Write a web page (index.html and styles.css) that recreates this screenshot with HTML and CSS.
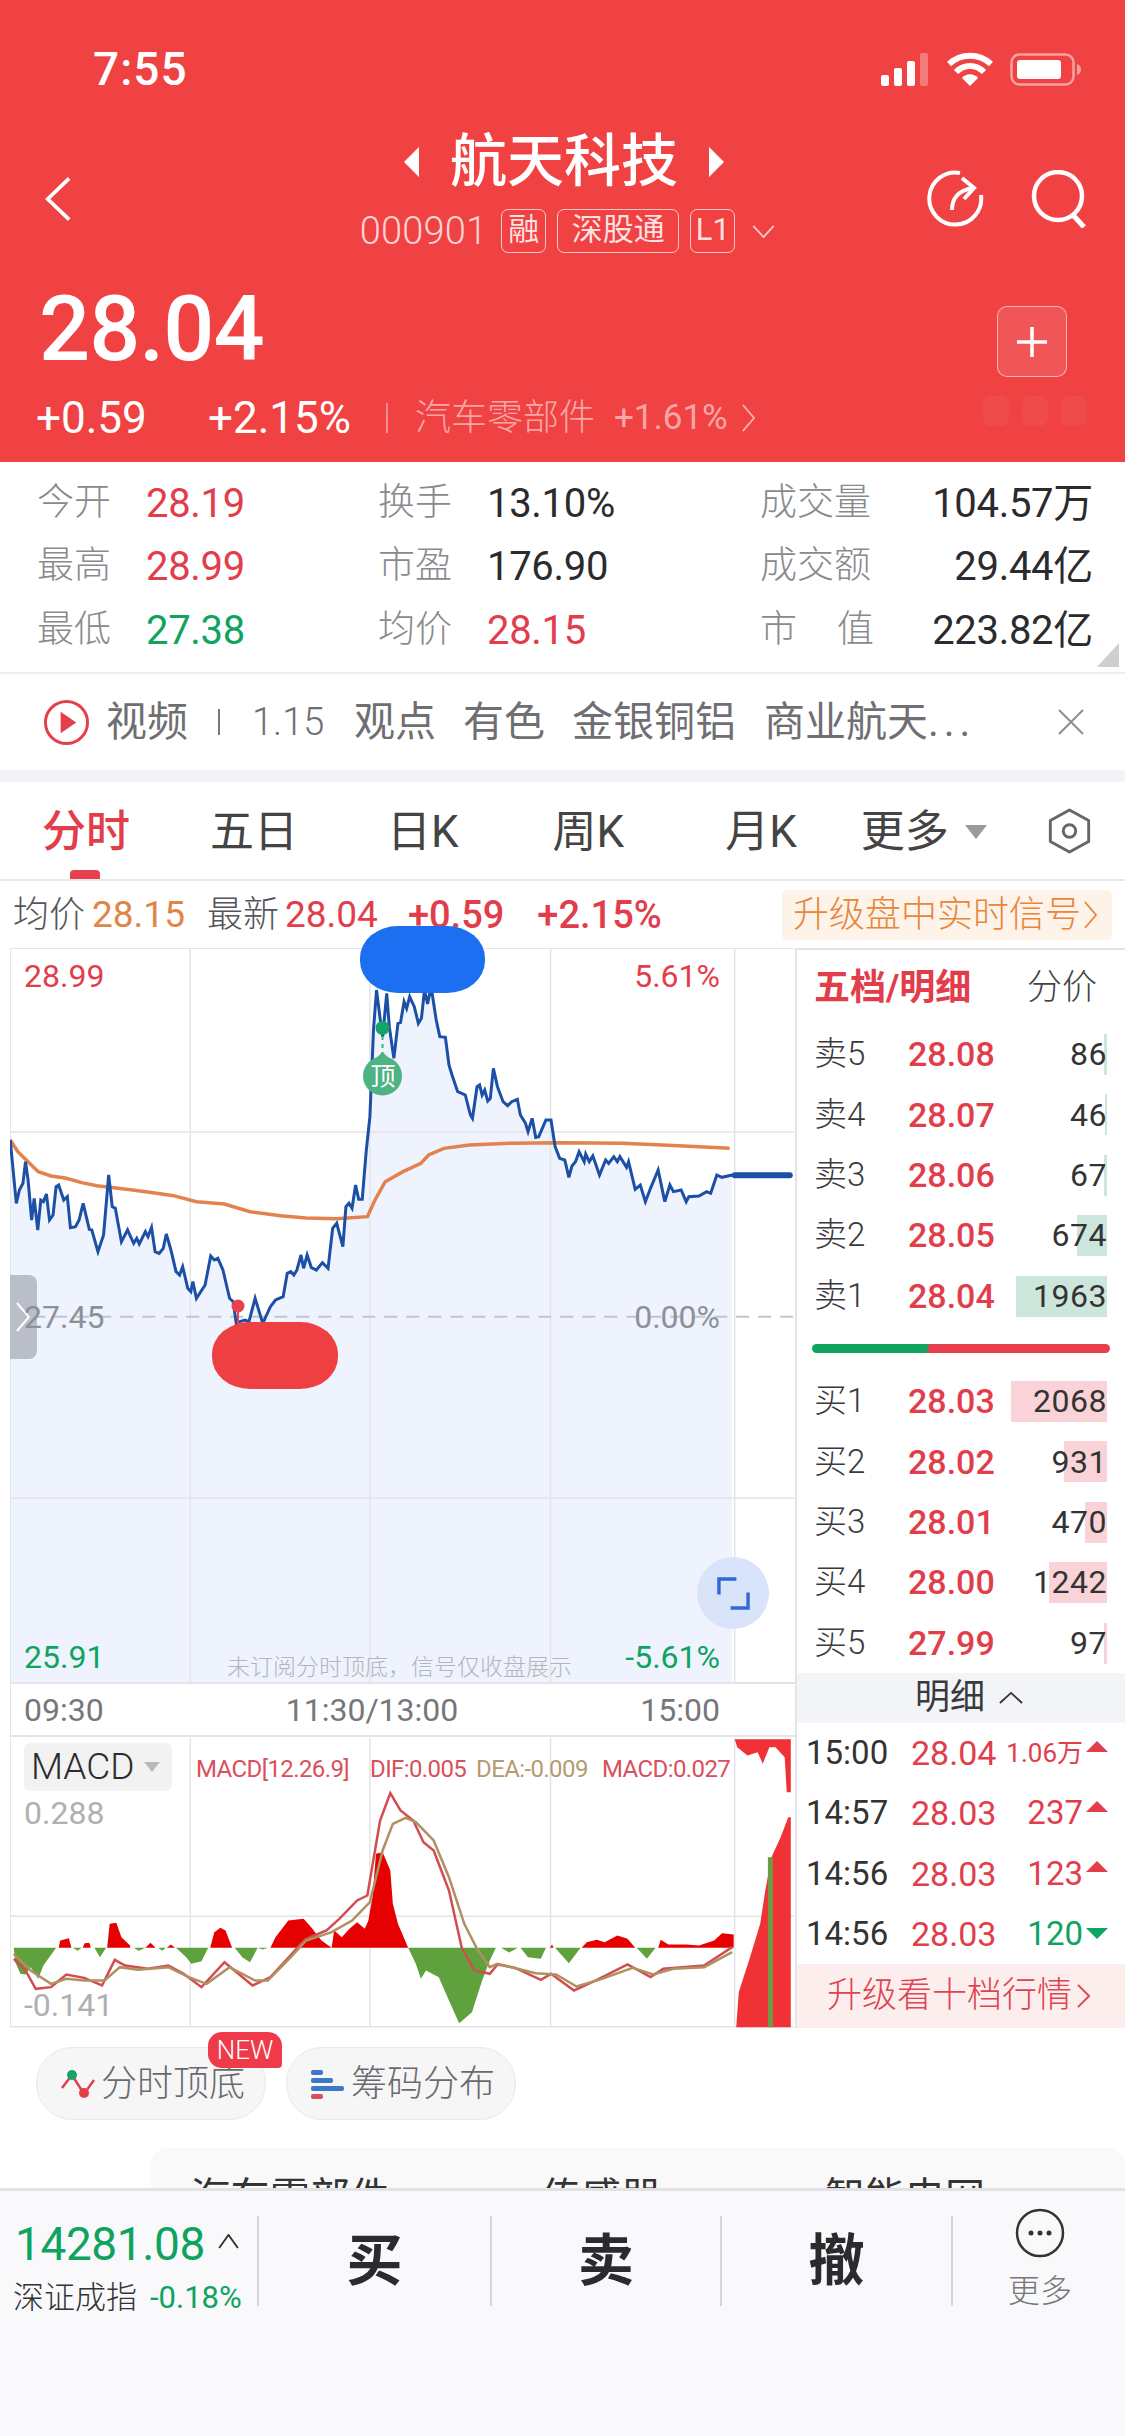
FILE: index.html
```html
<!DOCTYPE html>
<html lang="zh-CN">
<head>
<meta charset="utf-8">
<title>航天科技</title>
<link rel="stylesheet" href="styles.css">
</head>
<body>
<div class="page">
  <header class="header">
    <div class="status">
      <span class="clock">7:55</span>
      <div class="status-icons">
        <svg class="ic-signal" viewBox="0 0 50 33"><rect x="0" y="22" width="8" height="11" rx="2" fill="#fff"/><rect x="13" y="15" width="8" height="18" rx="2" fill="#fff"/><rect x="26" y="8" width="8" height="25" rx="2" fill="#fff"/><rect x="39" y="0" width="8" height="33" rx="2" fill="#fff" opacity=".3"/></svg>
        <svg class="ic-wifi" viewBox="0 0 46 34"><path d="M2 12 C14 1 32 1 44 12 M9 20 C17 12 29 12 37 20" fill="none" stroke="#fff" stroke-width="6"/><path d="M15 26 C19 21 27 21 31 26 L23 34 Z" fill="#fff"/></svg>
        <svg class="ic-batt" viewBox="0 0 72 33"><rect x="1.5" y="1.5" width="62" height="30" rx="8" fill="none" stroke="#fff" stroke-opacity=".5" stroke-width="2.5"/><rect x="7" y="7" width="44" height="19" rx="3" fill="#fff"/><path d="M67 11 C70 12 71 14 71 16.500 C71 19 70 21 67 22 Z" fill="#fff" fill-opacity=".5"/></svg>
      </div>
    </div>
    <div class="nav">
      <svg class="ic-back" viewBox="0 0 30 48"><path d="M27 2 L4 24 L27 46" fill="none" stroke="#fff" stroke-width="4"/></svg>
      <div class="title-block">
        <div class="title-row">
          <svg class="ic-tri" viewBox="0 0 18 36"><path d="M18 0 L0 18 L18 36 Z" fill="#fff"/></svg>
          <h1 class="title">航天科技</h1>
          <svg class="ic-tri" viewBox="0 0 18 36"><path d="M0 0 L18 18 L0 36 Z" fill="#fff"/></svg>
        </div>
        <div class="sub-row">
          <span class="code">000901</span>
          <span class="tag tag-sq">融</span>
          <span class="tag tag-wide">深股通</span>
          <span class="tag tag-sq">L1</span>
          <svg class="ic-down" viewBox="0 0 24 14"><path d="M1 1 L12 13 L23 1" fill="none" stroke="#fff" stroke-opacity=".7" stroke-width="2"/></svg>
        </div>
      </div>
      <div class="nav-actions">
        <svg class="ic-refresh" viewBox="0 0 58 58"><path d="M34 3 A26 26 0 1 0 55 25" fill="none" stroke="#fff" stroke-width="4"/><path d="M26 40 C26 28 32 21 46 18" fill="none" stroke="#fff" stroke-width="4"/><path d="M36 8 L48 18 L38 29" fill="none" stroke="#fff" stroke-width="4"/></svg>
        <svg class="ic-search" viewBox="0 0 56 58"><circle cx="27" cy="26" r="24" fill="none" stroke="#fff" stroke-width="4.500"/><path d="M41 44 L53 57" stroke="#fff" stroke-width="5"/></svg>
      </div>
    </div>
    <div class="quote">
      <div class="quote-main">
        <div class="price">28.04</div>
        <div class="change-row">
          <span class="chg chg-a">+0.59</span>
          <span class="chg chg-b">+2.15%</span>
          <span class="sep"></span>
          <span class="sector">汽车零部件</span>
          <span class="sector-pct">+1.61%</span>
          <svg class="ic-sector" viewBox="0 0 14 30"><path d="M1 1 L13 15 L1 29" fill="none" stroke="#fff" stroke-opacity=".6" stroke-width="2"/></svg>
        </div>
      </div>
      <div class="quote-side">
        <button class="plus"><svg viewBox="0 0 34 34"><path d="M17 2 V32 M2 17 H32" stroke="#fff" stroke-width="3.500"/></svg></button>
        <div class="ghost"><i></i><i></i><i></i></div>
      </div>
    </div>
  </header>

  <section class="stats">
    <div class="stat"><span class="k">今开</span><span class="v up">28.19</span></div>
    <div class="stat"><span class="k">换手</span><span class="v">13.10%</span></div>
    <div class="stat wide"><span class="k">成交量</span><span class="v">104.57万</span></div>
    <div class="stat"><span class="k">最高</span><span class="v up">28.99</span></div>
    <div class="stat"><span class="k">市盈</span><span class="v">176.90</span></div>
    <div class="stat wide"><span class="k">成交额</span><span class="v">29.44亿</span></div>
    <div class="stat"><span class="k">最低</span><span class="v down">27.38</span></div>
    <div class="stat"><span class="k">均价</span><span class="v up">28.15</span></div>
    <div class="stat wide"><span class="k just">市值</span><span class="v">223.82亿</span></div>
    <span class="corner"></span>
  </section>

  <section class="news">
    <svg class="ic-play" viewBox="0 0 48 48"><circle cx="24" cy="24" r="21.500" fill="none" stroke="#e4404c" stroke-width="3"/><path d="M18 13 L34 24 L18 35 Z" fill="#e4404c"/></svg>
    <span class="news-a">视频</span>
    <span class="news-bar"></span>
    <span class="news-date">1.15</span>
    <span class="news-b">观点</span>
    <span class="news-c">有色</span>
    <span class="news-d">金银铜铝</span>
    <span class="news-e">商业航天<span class="dots">...</span></span>
    <svg class="ic-close" viewBox="0 0 26 26"><path d="M1 1 L25 25 M25 1 L1 25" stroke="#8d8d92" stroke-width="2"/></svg>
  </section>

  <nav class="tabs">
    <span class="tab tab-on">分时</span>
    <span class="tab t2">五日</span>
    <span class="tab t3">日K</span>
    <span class="tab t4">周K</span>
    <span class="tab t5">月K</span>
    <span class="tab t6">更多</span>
    <span class="tri-more"></span>
    <svg class="ic-hex" viewBox="0 0 44 48"><path d="M22 2 L42 13 V35 L22 46 L2 35 V13 Z" fill="none" stroke="#666" stroke-width="3" stroke-linejoin="round"/><circle cx="22" cy="24" r="6.500" fill="none" stroke="#666" stroke-width="3"/></svg>
  </nav>

  <div class="info">
    <span class="i-k">均价</span><span class="i-avg">28.15</span>
    <span class="i-k i-k2">最新</span><span class="i-new">28.04</span>
    <span class="i-chg1">+0.59</span><span class="i-chg2">+2.15%</span>
    <span class="upgrade">升级盘中实时信号<svg viewBox="0 0 14 30"><path d="M1 1 L13 15 L1 29" fill="none" stroke="#e8863c" stroke-width="2"/></svg></span>
  </div>

  <div class="main">
    <div class="charts">
      <div class="price-pane">
        <svg class="canvas" viewBox="10 948 785 734">
          <g transform="translate(0 930) scale(.5102 .33333)">
            <polygon fill="#eef3fd" points="20,630 32,820 38,780 45,760 50,695 55,750 62,870 67,805 74,900 80,810 85,815 91,792 97,870 104,855 110,770 115,765 125,810 132,800 138,893 148,890 155,870 163,820 175,898 180,900 192,965 203,915 213,735 220,830 226,835 238,935 250,900 262,940 268,925 273,942 285,905 290,920 297,892 304,965 312,970 320,955 326,912 335,960 345,1025 352,1035 358,1010 368,1075 374,1085 378,1055 385,1105 402,1065 413,978 420,990 427,985 437,1020 450,1105 457,1115 463,1180 470,1175 480,1170 488,1175 500,1105 515,1180 530,1130 540,1110 555,1100 563,1030 570,1025 576,1035 582,1020 590,975 595,1015 602,975 610,1012 620,1020 632,998 643,1015 652,895 660,880 672,950 678,830 684,820 690,835 697,765 703,808 710,808 718,660 725,560 732,300 738,180 745,265 750,320 758,190 763,290 772,385 780,280 785,278 792,215 797,235 803,200 812,230 820,280 826,265 832,180 838,222 845,170 855,270 862,320 873,322 880,405 886,435 897,485 905,490 912,495 922,555 926,565 935,470 940,465 945,495 950,480 956,513 961,505 967,415 975,470 986,515 995,527 1003,515 1014,508 1020,555 1030,580 1035,605 1043,565 1050,622 1056,620 1070,570 1080,570 1088,650 1097,685 1107,690 1115,742 1121,708 1128,695 1135,665 1145,695 1148,672 1155,695 1162,678 1175,735 1187,690 1193,700 1203,680 1210,695 1215,680 1228,712 1232,695 1245,778 1255,765 1265,815 1275,775 1290,720 1303,815 1313,765 1320,785 1335,780 1345,815 1350,800 1370,798 1385,785 1393,790 1405,735 1415,742 1435,735 1435,2256 20,2256"/>
            <g class="grid">
              <path d="M20 55 V2256 M373 55 V2256 M725 55 V2256 M1079 55 V2256 M1440 55 V2256 M20 55 H1556 M20 606 H1556 M20 1704 H1556"/>
            </g>
            <path class="dash" d="M20 1160 H1556"/>
            <polyline class="avg" points="20,630 35,665 55,695 75,725 100,738 130,745 160,758 190,767 215,772 260,780 300,788 340,797 385,815 440,822 490,845 550,857 600,864 660,866 720,860 735,810 755,755 790,725 825,700 840,675 870,655 920,645 1000,640 1100,638 1220,640 1330,647 1430,655"/>
            <polyline class="line" points="20,630 32,820 38,780 45,760 50,695 55,750 62,870 67,805 74,900 80,810 85,815 91,792 97,870 104,855 110,770 115,765 125,810 132,800 138,893 148,890 155,870 163,820 175,898 180,900 192,965 203,915 213,735 220,830 226,835 238,935 250,900 262,940 268,925 273,942 285,905 290,920 297,892 304,965 312,970 320,955 326,912 335,960 345,1025 352,1035 358,1010 368,1075 374,1085 378,1055 385,1105 402,1065 413,978 420,990 427,985 437,1020 450,1105 457,1115 463,1180 470,1175 480,1170 488,1175 500,1105 515,1180 530,1130 540,1110 555,1100 563,1030 570,1025 576,1035 582,1020 590,975 595,1015 602,975 610,1012 620,1020 632,998 643,1015 652,895 660,880 672,950 678,830 684,820 690,835 697,765 703,808 710,808 718,660 725,560 732,300 738,180 745,265 750,320 758,190 763,290 772,385 780,280 785,278 792,215 797,235 803,200 812,230 820,280 826,265 832,180 838,222 845,170 855,270 862,320 873,322 880,405 886,435 897,485 905,490 912,495 922,555 926,565 935,470 940,465 945,495 950,480 956,513 961,505 967,415 975,470 986,515 995,527 1003,515 1014,508 1020,555 1030,580 1035,605 1043,565 1050,622 1056,620 1070,570 1080,570 1088,650 1097,685 1107,690 1115,742 1121,708 1128,695 1135,665 1145,695 1148,672 1155,695 1162,678 1175,735 1187,690 1193,700 1203,680 1210,695 1215,680 1228,712 1232,695 1245,778 1255,765 1265,815 1275,775 1290,720 1303,815 1313,765 1320,785 1335,780 1345,815 1350,800 1370,798 1385,785 1393,790 1405,735 1415,742 1435,735"/>
            <path class="tail" d="M1440 736 H1548"/>
          </g>
          <path d="M382.500 1036 V1056" stroke="#3fb07a" stroke-width="2" stroke-dasharray="4 4"/>
          <circle cx="382.500" cy="1028" r="7" fill="#13a566"/>
          <path d="M382.500 1052 L372 1062 L393 1062 Z" fill="#4db382"/>
          <circle cx="382.500" cy="1076" r="19.500" fill="#4db382"/>
          <path d="M238 1312 V1324" stroke="#e9404c" stroke-width="2"/>
          <circle cx="238" cy="1306" r="6.500" fill="#e9404c"/>
        </svg>
        <span class="top-mark">顶</span>
        <span class="pl pl-tl up">28.99</span>
        <span class="pl pl-tr up">5.61%</span>
        <div class="handle"><svg viewBox="0 0 14 30"><path d="M1 1 L13 15 L1 29" fill="none" stroke="#fff" stroke-width="2"/></svg></div>
        <span class="pl pl-ml gray">27.45</span>
        <span class="pl pl-mr gray">0.00%</span>
        <span class="pl pl-bl down">25.91</span>
        <span class="pl pl-br down">-5.61%</span>
        <span class="watermark">未订阅分时顶底，信号仅收盘展示</span>
        <div class="expand"><svg viewBox="0 0 34 34"><path d="M2 18 V2 H20 M32 16 V32 H14" fill="none" stroke="#2f68d8" stroke-width="3.500"/></svg></div>
        <span class="blob-blue"></span>
        <span class="blob-red"></span>
      </div>
      <div class="times"><span>09:30</span><span>11:30/13:00</span><span>15:00</span></div>
      <div class="macd-pane">
        <svg class="canvas" viewBox="10 1737 785 290">
          <g transform="translate(0 1690) scale(.5102 .33333)">
            <path class="grid-path" d="M20 142 V1010 M373 142 V1010 M725 142 V1010 M1079 142 V1010 M1440 142 V1010 M20 677 H1556 M20 1009 H1556"/>
            <g fill="#e60000">
              <polygon points="115,772 118,750 135,743 140,772"/>
              <polygon points="162,772 166,758 175,757 178,772"/>
              <polygon points="210,772 215,700 228,697 238,740 255,765 255,772"/>
              <polygon points="285,772 295,757 305,772"/>
              <polygon points="327,772 335,762 343,772"/>
              <polygon points="412,772 420,725 432,712 442,720 455,772"/>
              <polygon points="530,772 540,740 565,690 595,685 610,710 630,750 650,772"/>
              <polygon points="650,772 655,720 670,740 685,715 700,695 715,715 722,690 730,620 737,490 750,485 765,540 770,640 780,700 800,772"/>
              <polygon points="1078,772 1082,762 1085,772"/>
              <polygon points="1140,772 1150,755 1170,748 1185,755 1210,735 1230,745 1245,772"/>
              <polygon points="1290,772 1295,748 1310,762 1345,762 1370,765 1400,750 1415,728 1438,732 1438,772"/>
            </g>
            <g fill="#5fa13c">
              <polygon points="27,772 30,815 40,850 50,852 60,830 75,865 85,825 110,772"/>
              <polygon points="143,772 152,781 160,772"/>
              <polygon points="185,772 196,800 208,772"/>
              <polygon points="262,772 272,781 285,772"/>
              <polygon points="310,772 318,781 325,772"/>
              <polygon points="345,772 365,800 375,820 395,812 408,772"/>
              <polygon points="460,772 475,800 490,815 505,772"/>
              <polygon points="505,772 515,777 525,772"/>
              <polygon points="800,772 815,820 825,865 835,840 860,860 880,930 900,998 925,965 945,870 960,810 972,772"/>
              <polygon points="982,772 998,786 1015,772"/>
              <polygon points="1020,772 1035,800 1060,805 1070,772"/>
              <polygon points="1088,772 1115,818 1138,772"/>
              <polygon points="1248,772 1268,805 1285,772"/>
            </g>
            <polyline class="dif" points="27,805 50,840 70,895 100,890 130,852 165,862 200,885 225,808 245,825 290,835 330,825 360,850 395,890 440,815 495,885 530,860 560,810 590,760 600,745 640,720 665,685 700,630 720,615 735,480 745,390 765,308 785,360 810,390 830,455 850,480 880,600 905,772 930,840 960,850 975,822 1010,832 1060,868 1080,850 1125,900 1170,868 1230,822 1275,860 1300,835 1380,825 1410,795 1435,770"/>
            <polyline class="dea" points="27,790 60,840 100,880 130,865 165,870 205,870 235,830 270,838 330,830 370,860 405,880 450,830 500,870 525,870 570,800 600,750 650,725 690,690 725,635 750,480 770,400 795,382 815,395 850,450 880,560 910,700 935,775 960,830 975,820 1050,848 1090,852 1130,888 1180,865 1240,832 1280,852 1320,835 1380,830 1435,785"/>
            <polygon fill="#f03236" points="1443,1010 1448,905 1470,800 1490,700 1500,600 1512,500 1530,440 1545,380 1550,380 1550,1010"/>
            <polygon fill="#f03236" points="1440,146 1550,146 1550,305 1542,305 1538,200 1520,170 1508,170 1495,220 1485,185 1465,195 1445,170"/>
            <path class="macd-stripe" d="M1510 1010 V500"/>
          </g>
        </svg>
        <div class="macd-btn">MACD<span class="tri-macd"></span></div>
        <div class="legend"><span class="lg-a">MACD[12.26.9]</span><span class="lg-b">DIF:0.005</span><span class="lg-c">DEA:-0.009</span><span class="lg-d">MACD:0.027</span></div>
        <span class="ml ml-t">0.288</span>
        <span class="ml ml-b">-0.141</span>
      </div>
    </div>

    <aside class="panel">
      <div class="p-title"><span class="p-t1">五档/明细</span><span class="p-t2">分价</span></div>
      <div class="lv"><i class="bar bg" style="width:3px"></i><span class="lv-k">卖5</span><span class="lv-p">28.08</span><span class="lv-q">86</span></div>
      <div class="lv"><i class="bar bg" style="width:2px"></i><span class="lv-k">卖4</span><span class="lv-p">28.07</span><span class="lv-q">46</span></div>
      <div class="lv"><i class="bar bg" style="width:3px"></i><span class="lv-k">卖3</span><span class="lv-p">28.06</span><span class="lv-q">67</span></div>
      <div class="lv"><i class="bar bg" style="width:30px"></i><span class="lv-k">卖2</span><span class="lv-p">28.05</span><span class="lv-q">674</span></div>
      <div class="lv"><i class="bar bg" style="width:91px"></i><span class="lv-k">卖1</span><span class="lv-p">28.04</span><span class="lv-q">1963</span></div>
      <div class="ratio"><span></span></div>
      <div class="lv"><i class="bar br" style="width:96px"></i><span class="lv-k">买1</span><span class="lv-p">28.03</span><span class="lv-q">2068</span></div>
      <div class="lv"><i class="bar br" style="width:43px"></i><span class="lv-k">买2</span><span class="lv-p">28.02</span><span class="lv-q">931</span></div>
      <div class="lv"><i class="bar br" style="width:22px"></i><span class="lv-k">买3</span><span class="lv-p">28.01</span><span class="lv-q">470</span></div>
      <div class="lv"><i class="bar br" style="width:58px"></i><span class="lv-k">买4</span><span class="lv-p">28.00</span><span class="lv-q">1242</span></div>
      <div class="lv"><i class="bar br" style="width:3px"></i><span class="lv-k">买5</span><span class="lv-p">27.99</span><span class="lv-q">97</span></div>
      <div class="d-head">明细<svg viewBox="0 0 26 14"><path d="M1 13 L13 2 L25 13" fill="none" stroke="#333" stroke-width="2"/></svg></div>
      <div class="d-row"><span class="d-t">15:00</span><span class="d-p">28.04</span><span class="d-q up small">1.06万</span><i class="tu"></i></div>
      <div class="d-row"><span class="d-t">14:57</span><span class="d-p">28.03</span><span class="d-q up">237</span><i class="tu"></i></div>
      <div class="d-row"><span class="d-t">14:56</span><span class="d-p">28.03</span><span class="d-q up">123</span><i class="tu"></i></div>
      <div class="d-row"><span class="d-t">14:56</span><span class="d-p">28.03</span><span class="d-q down">120</span><i class="td"></i></div>
      <div class="ten">升级看十档行情<svg viewBox="0 0 14 26"><path d="M1 1 L13 13 L1 25" fill="none" stroke="#df4350" stroke-width="2"/></svg></div>
    </aside>
  </div>

  <div class="chips">
    <div class="chip chip-a">
      <svg viewBox="0 0 34 30"><path d="M1 19 L11 6 L23 25 L33 11" fill="none" stroke="#e4404c" stroke-width="2.500"/><circle cx="11" cy="6" r="5" fill="#13a566"/><circle cx="23" cy="24" r="5" fill="#e4404c"/></svg>
      <span>分时顶底</span>
      <em class="new">NEW</em>
    </div>
    <div class="chip chip-b">
      <svg viewBox="0 0 34 30"><rect y="1" width="12" height="5" rx="2" fill="#3e78c8"/><rect y="9" width="22" height="5" rx="2" fill="#3e78c8"/><rect y="17" width="33" height="5" rx="2" fill="#3e78c8"/><rect y="25" width="12" height="5" rx="2" fill="#d9505c"/></svg>
      <span>筹码分布</span>
    </div>
  </div>

  <div class="peek">
    <span class="pk1">汽车零部件</span><span class="pk2">传感器</span><span class="pk3">智能电网</span>
  </div>

  <footer class="bottom">
    <div class="index">
      <div class="idx-top"><span class="idx-num">14281.08</span><svg viewBox="0 0 22 16"><path d="M1 15 L11 1 L21 15" fill="none" stroke="#333" stroke-width="2"/></svg></div>
      <div class="idx-sub"><span class="idx-name">深证成指</span><span class="idx-pct">-0.18%</span></div>
    </div>
    <div class="act act-1">买</div>
    <div class="act act-2">卖</div>
    <div class="act act-3">撤</div>
    <div class="more">
      <svg viewBox="0 0 50 50"><circle cx="25" cy="25" r="23" fill="none" stroke="#333" stroke-width="2.500"/><circle cx="16" cy="25" r="2.500" fill="#333"/><circle cx="25" cy="25" r="2.500" fill="#333"/><circle cx="34" cy="25" r="2.500" fill="#333"/></svg>
      <span>更多</span>
    </div>
  </footer>
</div>
</body>
</html>
```

FILE: styles.css
```css
* { box-sizing: border-box; }
html, body { margin: 0; padding: 0; background: #fff; }
body { font-family: Roboto, "Noto Sans CJK SC", sans-serif; color: #2b2b2e; }
svg { display: block; }
.page { width: 1125px; height: 2436px; display: flex; flex-direction: column; overflow: hidden; position: relative; background: #fff; }
.up { color: #e23d4b; }
.down { color: #0ea35f; }
.gray { color: #8d9197; }

/* header */
.header { height: 462px; flex: none; background: #f04243; color: #fff; display: flex; flex-direction: column; }
.status { height: 110px; padding: 28px 43px 0 93px; display: flex; justify-content: space-between; align-items: center; }
.clock { font-size: 46px; line-height: 52px; font-weight: 500; letter-spacing: 1px; }
.status-icons { display: flex; align-items: center; }
.ic-signal { width: 50px; height: 33px; }
.ic-wifi { width: 46px; height: 34px; margin-left: 16px; }
.ic-batt { width: 72px; height: 33px; margin-left: 17px; }
.nav { height: 155px; padding: 21px 38px 0 44px; display: grid; grid-template-columns: 300px 1fr 300px; }
.ic-back { width: 28px; height: 46px; margin-top: 45px; }
.title-block { display: flex; flex-direction: column; align-items: center; }
.title-row { height: 62px; display: flex; align-items: center; gap: 31px; margin-left: -3px; }
.title { margin: 0; font-size: 57px; line-height: 62px; font-weight: 500; }
.ic-tri { width: 15px; height: 30px; }
.sub-row { height: 44px; margin-top: 16px; display: flex; align-items: center; margin-left: 4px; }
.code { font-size: 38px; line-height: 44px; font-weight: 300; color: rgba(255,255,255,.78); letter-spacing: .2px; margin-right: 14px; }
.tag { height: 44px; border: 1.5px solid rgba(255,255,255,.7); border-radius: 7px; font-size: 31px; line-height: 40px; text-align: center; color: rgba(255,255,255,.85); }
.tag-sq { width: 45px; }
.tag-wide { width: 122px; margin: 0 11px; }
.ic-down { width: 23px; height: 13px; margin-left: 17px; }
.nav-actions { display: flex; justify-content: flex-end; align-items: flex-start; gap: 47px; padding-top: 39px; }
.ic-refresh { width: 58px; height: 58px; }
.ic-search { width: 56px; height: 58px; }
.quote { flex: 1; display: flex; justify-content: space-between; padding: 15px 38px 0 36px; }
.price { font-size: 90px; line-height: 100px; font-weight: 500; margin-left: 3px; letter-spacing: -1px; }
.change-row { display: flex; align-items: center; height: 44px; margin-top: 16px; }
.chg { font-size: 44px; line-height: 44px; font-weight: 400; }
.chg-a { width: 172px; }
.sep { width: 2px; height: 30px; background: rgba(255,255,255,.4); margin: 0 27px 0 35px; }
.sector { font-size: 36px; line-height: 44px; color: rgba(255,255,255,.55); font-weight: 300; }
.sector-pct { font-size: 35px; line-height: 44px; color: rgba(255,255,255,.55); margin-left: 19px; }
.ic-sector { width: 13px; height: 28px; margin-left: 14px; }
.quote-side { display: flex; flex-direction: column; align-items: flex-end; width: 110px; }
.plus { width: 70px; height: 71px; margin: 26px 20px 0 0; padding: 0; background: #f05558; border: 1.5px solid rgba(255,255,255,.55); border-radius: 10px; display: flex; align-items: center; justify-content: center; }
.plus svg { width: 34px; height: 34px; }
.ghost { display: flex; gap: 10px; margin: 19px 0 0; width: 104px; justify-content: space-between; }
.ghost i { width: 26px; height: 30px; background: rgba(255,255,255,.05); border-radius: 8px; }

/* stats */
.stats { flex: none; height: 212px; padding: 9px 32px 0 37px; display: grid; grid-template-columns: 341px 382px 1fr; grid-auto-rows: 63.5px; border-bottom: 2px solid #eeeef0; position: relative; }
.stat { display: flex; align-items: center; }
.k { width: 109px; font-size: 37px; line-height: 44px; color: #8a8a8e; font-weight: 300; white-space: nowrap; }
.v { font-size: 40px; line-height: 44px; letter-spacing: -.3px; padding-top: 2px; }
.wide .k { width: auto; }
.wide .v { margin-left: auto; }
.just { width: 114px !important; text-align-last: justify; }
.corner { position: absolute; right: 6px; bottom: 5px; width: 22px; height: 24px; background: #cfcfd2; clip-path: polygon(100% 0, 100% 100%, 0 100%); }

/* news */
.news { flex: none; height: 96px; display: flex; align-items: center; padding-left: 43px; color: #6f6f73; font-size: 41px; line-height: 48px; }
.ic-play { width: 47px; height: 47px; margin-right: 16px; }
.news-a { width: 112px; }
.news-bar { width: 2px; height: 26px; background: #777; }
.news-date { font-size: 38px; margin-left: 32px; width: 102px; font-weight: 300; }
.news-b { width: 109px; }
.news-c { width: 109px; }
.news-d { width: 192px; }
.news-e { width: 290px; white-space: nowrap; }
.dots { letter-spacing: 5px; }
.ic-close { width: 26px; height: 26px; margin-left: 4px; }

/* tabs */
.tabs { flex: none; margin-top: 12px; height: 99px; border-bottom: 2px solid #e7e7ea; position: relative; display: flex; align-items: center; font-size: 44px; line-height: 52px; color: #444; padding-left: 42px; box-shadow: 0 -12px 0 #f2f4fa; }
.tab { display: block; margin-top: 2px; }
.tab-on { color: #e23d4b; font-weight: 500; position: relative; }
.tab-on::after { content: ""; position: absolute; left: 28px; bottom: -21px; width: 30px; height: 9px; background: #e8404e; border-radius: 4px 4px 0 0; }
.t2 { margin-left: 80px; }
.t3 { margin-left: 89px; }
.t4 { margin-left: 94px; }
.t5 { margin-left: 101px; }
.t6 { margin-left: 64px; }
.tri-more { width: 0; height: 0; border-left: 11px solid transparent; border-right: 11px solid transparent; border-top: 14px solid #9b9b9f; margin-left: 16px; margin-top: 2px; }
.ic-hex { width: 43px; height: 46px; margin-left: 61px; }

/* info */
.info { flex: none; height: 67px; display: flex; align-items: center; font-size: 36px; line-height: 44px; padding: 0 13px; }
.i-k { color: #55555a; font-weight: 300; }
.i-k2 { margin-left: 22px; }
.i-avg { color: #df8548; margin-left: 7px; font-size: 37px; }
.i-new { color: #e23d4b; margin-left: 6px; font-size: 37px; }
.i-chg1 { color: #e23d4b; margin-left: 30px; font-weight: 500; font-size: 38px; }
.i-chg2 { color: #e23d4b; margin-left: 33px; font-weight: 500; font-size: 38px; }
.upgrade { margin-left: auto; width: 330px; height: 50px; background: #fdf3e9; border-radius: 5px; color: #e8863c; display: flex; align-items: center; padding-left: 11px; font-size: 36px; font-weight: 300; }
.upgrade svg { width: 13px; height: 28px; margin-left: 3px; }

/* main */
.main { flex: none; height: 1080px; display: flex; }
.charts { width: 785px; margin-left: 10px; flex: none; display: flex; flex-direction: column; position: relative; }
.canvas { position: absolute; left: 0; top: 0; width: 100%; height: 100%; }
.canvas polyline, .canvas path { vector-effect: non-scaling-stroke; }
.price-pane { height: 734px; position: relative; flex: none; }
.grid path, .grid-path { fill: none; stroke: #e3e4e9; stroke-width: 1.500; }
.dash { fill: none; stroke: #c2c6cc; stroke-width: 2; stroke-dasharray: 13 9; }
.avg { fill: none; stroke: #e2824e; stroke-width: 3.500; }
.line { fill: none; stroke: #1c4fa6; stroke-width: 3; }
.tail { fill: none; stroke: #1c4fa6; stroke-width: 6; stroke-linecap: round; }
.top-mark { position: absolute; left: 360px; top: 112px; width: 26px; text-align: center; font-size: 25px; line-height: 34px; color: #fff; }
.pl { position: absolute; font-size: 32px; line-height: 38px; }
.pl-tl { left: 14px; top: 9px; }
.pl-tr { right: 75px; top: 9px; }
.pl-ml { left: 14px; top: 350px; }
.pl-mr { right: 75px; top: 350px; }
.pl-bl { left: 14px; top: 690px; }
.pl-br { right: 75px; top: 690px; }
.handle { position: absolute; left: 0; top: 327px; width: 27px; height: 84px; background: #b9bec8; border-radius: 0 8px 8px 0; display: flex; align-items: center; padding-left: 6px; }
.handle svg { width: 14px; height: 30px; }
.watermark { position: absolute; left: 217px; top: 704px; font-size: 23px; line-height: 32px; color: #b3b5ba; font-weight: 300; }
.expand { position: absolute; left: 687px; top: 609px; width: 72px; height: 72px; border-radius: 50%; background: #d9e4fa; display: flex; align-items: center; justify-content: center; }
.expand svg { width: 33px; height: 33px; }
.blob-blue { position: absolute; left: 350px; top: -22px; width: 125px; height: 67px; background: #1b6ff0; border-radius: 38px / 32px; z-index: 2; }
.blob-red { position: absolute; left: 202px; top: 374px; width: 126px; height: 67px; background: #ee4043; border-radius: 38px / 32px; z-index: 2; }
.times { height: 55px; flex: none; display: flex; justify-content: space-between; padding: 0 75px 0 13px; align-items: center; font-size: 32px; line-height: 38px; color: #76767b; background: #fff; border-top: 2px solid #e4e4e8; border-bottom: 2px solid #e4e4e8; border-left: 1.500px solid #e3e4e9; }
.macd-pane { height: 291px; flex: none; position: relative; }
.macd-stripe { fill: none; stroke: #6e9c42; stroke-width: 5; }
.dif { fill: none; stroke: #d24c50; stroke-width: 2.500; }
.dea { fill: none; stroke: #b09060; stroke-width: 2.500; }
.macd-btn { position: absolute; left: 14px; top: 6px; width: 148px; height: 48px; background: #f2f2f3; border-radius: 6px; font-size: 37px; line-height: 48px; padding-left: 7px; display: flex; align-items: center; font-weight: 300; }
.tri-macd { width: 0; height: 0; border-left: 8px solid transparent; border-right: 8px solid transparent; border-top: 10px solid #b8b8bb; margin-left: 9px; }
.legend { position: absolute; left: 186px; top: 18px; height: 28px; font-size: 24px; line-height: 28px; display: flex; white-space: nowrap; letter-spacing: -.6px; }
.lg-a { width: 174px; color: #d9505c; }
.lg-b { width: 106px; color: #d9505c; }
.lg-c { width: 126px; color: #b59a72; }
.lg-d { color: #d9505c; }
.ml { position: absolute; left: 14px; font-size: 32px; line-height: 38px; color: #b0b0b3; }
.ml-t { top: 57px; }
.ml-b { top: 249px; }

/* panel */
.panel { width: 330px; flex: none; border-top: 2px solid #e4e4e8; border-left: 2px solid #e4e4e8; display: flex; flex-direction: column; }
.p-title { height: 74px; flex: none; display: flex; justify-content: space-between; align-items: center; padding: 2px 28px 0 17px; }
.p-t1 { color: #e23d4b; font-size: 36px; line-height: 44px; font-weight: 700; }
.p-t2 { font-size: 35px; line-height: 44px; color: #444; font-weight: 300; }
.lv { height: 60.400px; flex: none; display: grid; grid-template-columns: 94px 1fr auto; align-items: center; padding: 0 18px 0 17px; position: relative; }
.bar { position: absolute; right: 18px; top: 10px; height: 41px; }
.bg { background: #cde6dc; }
.br { background: #f9d3d8; }
.lv-k { font-size: 33px; line-height: 44px; color: #3a3a3e; font-weight: 300; position: relative; }
.lv-p { font-size: 34px; line-height: 44px; color: #e23d4b; font-weight: 500; position: relative; }
.lv-q { font-size: 32px; line-height: 44px; color: #333; font-weight: 400; letter-spacing: .5px; position: relative; }
.ratio { height: 45px; flex: none; display: flex; align-items: center; padding: 0 15px; }
.ratio span { display: block; width: 100%; height: 9px; border-radius: 5px; background: linear-gradient(100deg, #0fa55f 38.500%, #e83e4c 39.500%); }
.d-head { height: 50px; flex: none; background: #f3f4f8; display: flex; align-items: center; justify-content: center; font-size: 35px; line-height: 44px; color: #3a3a3e; gap: 14px; padding-left: 16px; }
.d-head svg { width: 24px; height: 13px; }
.d-row { height: 60.300px; flex: none; display: flex; align-items: center; padding: 0 17px 0 9px; }
.d-t { font-size: 33px; line-height: 44px; width: 105px; color: #333; }
.d-p { font-size: 34px; line-height: 44px; color: #e23d4b; }
.d-q { margin-left: auto; font-size: 33px; line-height: 44px; }
.small { font-size: 26px; }
.tu, .td { width: 0; height: 0; border-left: 11px solid transparent; border-right: 11px solid transparent; margin-left: 3px; }
.tu { border-bottom: 11px solid #e23d4b; margin-top: -14px; }
.td { border-top: 11px solid #0ea35f; }
.ten { flex: 1; background: #fdeeee; color: #df4350; display: flex; align-items: center; padding-left: 30px; font-size: 35px; line-height: 44px; font-weight: 300; }
.ten svg { width: 13px; height: 26px; margin-left: 5px; }

/* chips */
.chips { flex: none; display: flex; gap: 20px; padding: 19px 0 0 36px; height: 120px; }
.chip { width: 230px; height: 73px; border-radius: 36px; background: #f6f6f7; border: 1.500px solid #e9e9eb; display: flex; align-items: center; font-size: 36px; line-height: 44px; color: #6a6a6e; position: relative; padding-left: 24px; font-weight: 300; }
.chip svg { width: 34px; height: 30px; margin-right: 6px; flex: none; }
.new { position: absolute; left: 171px; top: -16px; width: 74px; height: 36px; background: #ee3a49; color: #fff; font-style: normal; border-radius: 14px 14px 4px 14px; font-size: 26px; line-height: 36px; text-align: center; font-weight: 300; }

/* peek */
.peek { flex: none; height: 40px; margin-left: 151px; background: #f9f9fa; border-radius: 16px 16px 0 0; padding-left: 39px; display: flex; font-size: 40px; line-height: 40px; color: #333; }
.peek span { padding-top: 30px; display: block; height: 70px; }
.pk1 { width: 351px; }
.pk2 { width: 284px; }

/* bottom */
.bottom { position: absolute; left: 0; right: 0; top: 2188px; bottom: 0; background: #f9f9fb; border-top: 3px solid #e2e2e4; display: flex; align-items: flex-start; }
.index { width: 257px; flex: none; padding: 26px 0 0 13px; }
.idx-top { display: flex; align-items: center; padding-left: 2px; height: 54px; }
.idx-num { font-size: 46px; line-height: 54px; color: #0ea35f; font-weight: 400; letter-spacing: -.4px; }
.idx-top svg { width: 21px; height: 15px; margin: 0 0 6px 13px; }
.idx-sub { display: flex; align-items: center; height: 40px; margin-top: 7px; }
.idx-name { font-size: 31px; line-height: 40px; color: #333; font-weight: 300; }
.idx-pct { font-size: 31px; line-height: 40px; color: #0ea35f; margin-left: 13px; }
.act { flex: none; height: 90px; margin-top: 25px; border-left: 2px solid #d5d5d8; display: flex; align-items: center; justify-content: center; font-size: 56px; line-height: 60px; font-weight: 700; color: #2b2b2e; }
.act-1 { width: 233px; }
.act-2 { width: 230px; }
.act-3 { width: 231px; }
.more { flex: 1; height: 90px; margin-top: 25px; border-left: 2px solid #d5d5d8; position: relative; }
.more svg { position: absolute; left: 62px; top: -8px; width: 50px; height: 50px; }
.more span { position: absolute; left: 55px; top: 55px; font-size: 32px; line-height: 40px; color: #77777b; font-weight: 300; white-space: nowrap; }
```
